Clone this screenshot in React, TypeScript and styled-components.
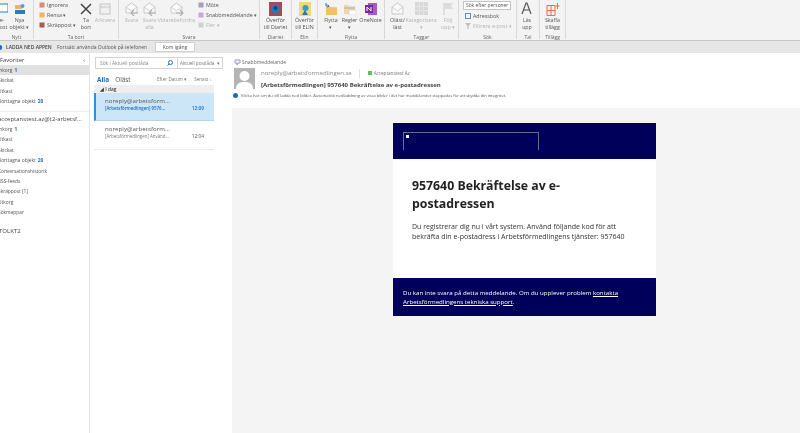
import * as React from "react";
import styled, { createGlobalStyle } from "styled-components";

const Global = createGlobalStyle`
  html, body { margin: 0; padding: 0; background: #fff; }
  body { font-family: "Open Sans", "Liberation Sans", sans-serif; color: #444; }
`;

const Window = styled.div`
  width: 800px;
  height: 433px;
  display: flex;
  flex-direction: column;
  overflow: hidden;
  filter: blur(0.35px);
`;

const Ribbon = styled.div`
  height: 40px;
  flex: none;
  display: flex;
  background: #f3f3f3;
  border-bottom: 1px solid #c8c8c8;
  overflow: hidden;
`;

const Group = styled.div<{ $w: number }>`
  width: ${(p) => p.$w}px;
  flex: none;
  box-sizing: border-box;
  border-right: 1px solid #d8d8d8;
  display: flex;
  flex-direction: column;
  height: 39px;
`;

const GroupBody = styled.div`
  height: 33.5px;
  flex: none;
  display: flex;
  align-items: flex-start;
`;

const GroupLabel = styled.div`
  font-size: 5px;
  line-height: 6px;
  text-align: center;
  color: #666;
`;

const Big = styled.div<{ $w: number; $off?: boolean; $shift?: number }>`
  width: ${(p) => p.$w}px;
  margin-left: ${(p) => p.$shift ?? 0}px;
  flex: none;
  display: flex;
  flex-direction: column;
  align-items: center;
  font-size: 5.3px;
  line-height: 7px;
  text-align: center;
  color: ${(p) => (p.$off ? "#b4b4b4" : "#555")};
  white-space: pre-line;
`;

const BigIcon = styled.div`
  height: 17px;
  flex: none;
  display: flex;
  align-items: center;
  justify-content: center;
`;

const SmallCol = styled.div<{ $w: number; $shift?: number }>`
  width: ${(p) => p.$w}px;
  margin-left: ${(p) => p.$shift ?? 0}px;
  flex: none;
  display: flex;
  flex-direction: column;
`;

const SmallItem = styled.div<{ $off?: boolean }>`
  height: 10px;
  display: flex;
  align-items: center;
  gap: 2px;
  font-size: 5.3px;
  white-space: nowrap;
  color: ${(p) => (p.$off ? "#b4b4b4" : "#555")};
`;

const SearchAction = styled(SmallItem)`
  padding-left: 2px;
`;

const PeopleInput = styled.div`
  width: 48px;
  height: 9px;
  box-sizing: border-box;
  background: #fff;
  border: 1px solid #c4c4c4;
  font-size: 4.9px;
  line-height: 7px;
  padding-left: 2px;
  color: #555;
  white-space: nowrap;
  overflow: hidden;
  margin: 1px 0 1px;
`;

const Notice = styled.div`
  height: 12px;
  flex: none;
  display: flex;
  align-items: center;
  background: #e6e6e6;
  font-size: 5px;
  color: #555;
  white-space: nowrap;
`;

const NoticeDot = styled.span`
  width: 2px;
  height: 5px;
  flex: none;
  background: #1b6cc0;
  border-radius: 0 3px 3px 0;
`;

const NoticeTitle = styled.span`
  margin-left: 4px;
  width: 51px;
  font-weight: 600;
  color: #444;
`;

const NoticeText = styled.span`
  width: 90px;
`;

const NoticeButton = styled.div`
  margin-left: 8px;
  width: 40px;
  height: 10px;
  background: #fff;
  border: 1px solid #d0d0d0;
  box-sizing: border-box;
  line-height: 8px;
  text-align: center;
`;

const Main = styled.div`
  flex: 1;
  min-height: 0;
  display: flex;
`;

const FolderPane = styled.div`
  width: 89px;
  flex: none;
  background: #fff;
  border-right: 1px solid #e4e4e4;
  padding-top: 1px;
  overflow: hidden;
`;

const Favorites = styled.div`
  height: 11px;
  display: flex;
  justify-content: space-between;
  align-items: center;
  font-size: 5.9px;
  color: #444;
  padding: 0 4px 0 0;
`;

const Folder = styled.div<{ $on?: boolean }>`
  height: 10.4px;
  line-height: 10.4px;
  font-size: 4.85px;
  color: #555;
  white-space: nowrap;
  background: ${(p) => (p.$on ? "#e1e1e1" : "transparent")};
  text-indent: -2px;
`;

const Count = styled.span`
  color: #1b6cc0;
  font-weight: 700;
  margin-left: 2px;
`;

const Rule = styled.div`
  height: 1px;
  background: #ececec;
  margin: 4px 0 3px;
`;

const Account = styled.div`
  font-size: 6px;
  line-height: 9.5px;
  white-space: nowrap;
  overflow: hidden;
  color: #444;
  margin: 0 2px 0 -2px;
`;

const Workspace = styled.div`
  font-size: 6.1px;
  line-height: 10px;
  margin: 8.5px 0 0 -1px;
  color: #444;
`;

const ListPane = styled.div`
  width: 136px;
  flex: none;
  box-sizing: border-box;
  padding: 4px 4px 0 4px;
  background: #fff;
`;

const SearchBox = styled.div`
  height: 12px;
  width: 128px;
  box-sizing: border-box;
  border: 1px solid #d4d4d4;
  display: flex;
  align-items: center;
  font-size: 4.9px;
  color: #888;
  margin-left: 1px;
`;

const SearchField = styled.div`
  width: 82px;
  height: 100%;
  flex: none;
  box-sizing: border-box;
  display: flex;
  align-items: center;
  justify-content: space-between;
  padding: 0 4px 0 4px;
  border-right: 1px solid #d4d4d4;
`;

const SearchScope = styled.div`
  flex: 1;
  display: flex;
  justify-content: space-between;
  padding: 0 2px;
  white-space: nowrap;
  color: #777;
  font-size: 4.6px;
`;

const Tabs = styled.div`
  height: 15px;
  box-sizing: border-box;
  padding-top: 3px;
  display: flex;
  align-items: center;
  margin: 1px 0 0 3px;
  width: 115px;
`;

const TabOn = styled.span`
  font-size: 6.4px;
  font-weight: 700;
  color: #1b6cc0;
`;

const TabOff = styled.span`
  font-size: 6.4px;
  margin-left: 6px;
  color: #555;
  flex: 1;
`;

const Sort = styled.span`
  font-size: 4.6px;
  color: #777;
  margin-left: 7px;
  white-space: nowrap;
`;

const DateRow = styled.div`
  height: 8px;
  width: 120px;
  line-height: 8px;
  background: #efefef;
  font-size: 4.8px;
  font-weight: 600;
  padding-left: 6px;
  box-sizing: border-box;
  color: #444;
`;

const Mail = styled.div<{ $on?: boolean }>`
  width: 120px;
  height: 28px;
  box-sizing: border-box;
  padding: 3px 10px 0 ${(p) => (p.$on ? 9 : 11)}px;
  background: ${(p) => (p.$on ? "#cde6f7" : "#fff")};
  border-left: ${(p) => (p.$on ? "2px solid #2f8fd8" : "none")};
  border-bottom: 1px solid ${(p) => (p.$on ? "#b9d3e6" : "#fff")};
`;

const MailSender = styled.div`
  font-size: 6.1px;
  line-height: 9px;
  letter-spacing: 0.05px;
  color: #555;
  white-space: nowrap;
`;

const MailLine = styled.div<{ $on?: boolean }>`
  display: flex;
  justify-content: space-between;
  font-size: 4.4px;
  line-height: 7px;
  white-space: nowrap;
  color: ${(p) => (p.$on ? "#1b6cc0" : "#777")};
  font-weight: ${(p) => (p.$on ? 600 : 400)};
`;

const MailTime = styled.span<{ $on?: boolean }>`
  font-size: 4.8px;
  color: ${(p) => (p.$on ? "#1b6cc0" : "#555")};
`;

const ListRule = styled.div`
  width: 120px;
  height: 1px;
  background: #ececec;
`;

const ReadingPane = styled.div`
  flex: 1;
  min-width: 0;
  display: flex;
  flex-direction: column;
  background: #fff;
`;

const MailHead = styled.div`
  height: 55px;
  flex: none;
  padding: 4px 0 0 8px;
  box-sizing: border-box;
`;

const QuickStep = styled.div`
  display: flex;
  align-items: center;
  gap: 1px;
  height: 10px;
  font-size: 5px;
  color: #666;
`;

const HeadRow = styled.div`
  display: flex;
  gap: 6px;
  margin-top: 1px;
`;

const Avatar = styled.div`
  width: 21px;
  height: 21px;
  flex: none;
  background: #b4b4b4;
  overflow: hidden;
`;

const HeadText = styled.div`
  display: flex;
  flex-direction: column;
`;

const FromLine = styled.div`
  display: flex;
  align-items: center;
  height: 10px;
  font-size: 6.05px;
  color: #888;
  white-space: nowrap;
`;

const FromDivider = styled.span`
  width: 1px;
  height: 9px;
  background: #e0e0e0;
  margin: 0 8px 0 7px;
`;

const Presence = styled.span`
  width: 4px;
  height: 4px;
  background: #56c85a;
  margin-right: 2px;
`;

const ToName = styled.span`
  font-size: 4.6px;
  color: #777;
`;

const Subject = styled.div`
  font-size: 6.05px;
  font-weight: 700;
  line-height: 11px;
  margin-top: 2px;
  color: #444;
  white-space: nowrap;
`;

const InfoBar = styled.div`
  display: flex;
  align-items: center;
  gap: 3px;
  height: 8px;
  margin: 0 0 0 -7px;
  padding-left: 6px;
  font-size: 4.1px;
  color: #555;
  white-space: nowrap;
`;

const InfoDot = styled.span`
  width: 5px;
  height: 5px;
  border-radius: 50%;
  background: #1b6cc0;
  flex: none;
`;

const MailBody = styled.div`
  flex: 1;
  margin-left: 6px;
  background: #f4f4f4;
  padding: 15px 0 0 161px;
`;

const Letter = styled.div`
  width: 263px;
  background: #fff;
`;

const LetterTop = styled.div`
  height: 36px;
  background: #00005a;
  box-sizing: border-box;
  padding: 9px 0 0 10px;
`;

const BrokenImage = styled.div`
  width: 136px;
  height: 18px;
  box-sizing: border-box;
  border: 1px solid #6a6a90;
  border-bottom: none;
  padding: 2px;
  display: flex;
  gap: 2px;
`;

const BrokenMark = styled.span`
  width: 3px;
  height: 3px;
  background: #fff;
  flex: none;
`;

const BrokenAlt = styled.span`
  font-size: 2px;
  line-height: 2.4px;
  color: #15154f;
`;

const LetterMain = styled.div`
  height: 119px;
  box-sizing: border-box;
  padding: 18px 24px 0 19px;
`;

const Title = styled.h1`
  margin: 0;
  font-size: 12.3px;
  line-height: 17.5px;
  font-weight: 700;
  color: #222;
  max-width: 160px;
`;

const Lead = styled.p`
  margin: 8.7px 0 0;
  font-size: 7.03px;
  line-height: 10px;
  color: #333;
`;

const LetterFoot = styled.div`
  height: 38px;
  background: #00005a;
  box-sizing: border-box;
  padding: 9.5px 10px 0;
  font-size: 6.15px;
  font-weight: 500;
  line-height: 9px;
  color: #fff;
  & a {
    color: #fff;
    text-decoration: underline;
  }
`;

const Envelope = ({ dir }: { dir: "l" | "r" }) => (
  <svg width="15" height="15" viewBox="0 0 15 15" fill="none">
    <path d="M2 6 7.5 2 13 6v6H2z" fill="#fafafa" stroke="#c8c8c8" />
    <path d="M2 6l5.5 4L13 6" stroke="#cfcfcf" />
    <path
      d={dir === "l" ? "M14 12H7m3-3-3 3 3 3" : "M7 12h7m-3-3 3 3-3 3"}
      stroke="#b0b0b0"
      strokeWidth="1.2"
    />
  </svg>
);

const MoveFolder = () => (
  <svg width="13" height="12" viewBox="0 0 13 12">
    <path d="M1 3h4l1 1.2h6V12H1z" fill="#f0c268" />
    <path d="M1 0v3h3M2.6 1.6 4 3 2.6 4.4" stroke="#2a7cc0" fill="none" />
  </svg>
);

const RuleFolder = () => (
  <svg width="13" height="12" viewBox="0 0 13 12">
    <path d="M1 2h4l1 1.2h6V11H1z" fill="#f5d79a" />
    <path d="M1 5h11" stroke="#8ab4d8" />
    <rect x="6" y="7" width="7" height="5" fill="#fff" stroke="#c4c4c4" strokeWidth="0.6" />
  </svg>
);

const Dot = ({ c }: { c: string }) => (
  <svg width="6" height="6" viewBox="0 0 6 6">
    <rect x="0.5" y="0.5" width="5" height="5" fill={c} />
  </svg>
);

const Grid = () => (
  <svg width="13" height="13" viewBox="0 0 13 13">
    <rect width="13" height="13" fill="#d8d8d8" />
    <path d="M4.5 0v13M8.5 0v13M0 4.5h13M0 8.5h13" stroke="#e6e6e6" />
  </svg>
);

export default function App() {
  return (
    <Window>
      <Global />
      <Ribbon>
        <Group $w={34}>
          <GroupBody>
            <Big $w={14} $shift={-5}>
              <BigIcon>
                <svg width="12" height="11" viewBox="0 0 12 11">
                  <rect x="0" y="1" width="12" height="8" fill="#fff" stroke="#2a7cc0" />
                </svg>
              </BigIcon>
              {"e-\npost"}
            </Big>
            <Big $w={21}>
              <BigIcon>
                <svg width="12" height="12" viewBox="0 0 12 12">
                  <rect x="1" y="2" width="7" height="4" fill="#eeb65c" />
                  <rect x="1" y="7" width="10" height="4" fill="#2a7cc0" />
                  <circle cx="8.5" cy="3" r="2" fill="#5a9ed6" />
                </svg>
              </BigIcon>
              {"Nya\nobjekt ▾"}
            </Big>
          </GroupBody>
          <GroupLabel>Nytt</GroupLabel>
        </Group>
        <Group $w={85}>
          <GroupBody>
            <SmallCol $w={40} $shift={5}>
              <SmallItem><Dot c="#d88a7a" />Ignorera</SmallItem>
              <SmallItem><Dot c="#eeb65c" />Rensa ▾</SmallItem>
              <SmallItem><Dot c="#a65a4a" />Skräppost ▾</SmallItem>
            </SmallCol>
            <Big $w={14}>
              <BigIcon>
                <svg width="12" height="12" viewBox="0 0 12 12">
                  <path d="M1 1l10 10M11 1 1 11" stroke="#444" strokeWidth="1.5" />
                </svg>
              </BigIcon>
              {"Ta\nbort"}
            </Big>
            <Big $w={24} $off>
              <BigIcon>
                <svg width="12" height="12" viewBox="0 0 12 12">
                  <rect x="1" y="1" width="10" height="10" fill="#f0f0f0" stroke="#c4c4c4" />
                  <path d="M1 4h10" stroke="#c4c4c4" />
                </svg>
              </BigIcon>
              Arkivera
            </Big>
          </GroupBody>
          <GroupLabel>Ta bort</GroupLabel>
        </Group>
        <Group $w={141}>
          <GroupBody>
            <Big $w={19} $off $shift={3}>
              <BigIcon><Envelope dir="l" /></BigIcon>
              Svara
            </Big>
            <Big $w={17} $off>
              <BigIcon><Envelope dir="l" /></BigIcon>
              {"Svara\nalla"}
            </Big>
            <Big $w={37} $off>
              <BigIcon><Envelope dir="r" /></BigIcon>
              Vidarebefordra
            </Big>
            <SmallCol $w={60} $shift={3}>
              <SmallItem><Dot c="#a89cc0" />Möte</SmallItem>
              <SmallItem><Dot c="#c8a8d8" />Snabbmeddelande ▾</SmallItem>
              <SmallItem $off><Dot c="#d0d0d0" />Fler ▾</SmallItem>
            </SmallCol>
          </GroupBody>
          <GroupLabel>Svara</GroupLabel>
        </Group>
        <Group $w={32}>
          <GroupBody>
            <Big $w={31}>
              <BigIcon>
                <svg width="13" height="14" viewBox="0 0 13 14">
                  <rect width="13" height="14" fill="#a84a50" />
                  <circle cx="6.5" cy="7" r="4.5" fill="#2a78b8" />
                  <circle cx="6.5" cy="6" r="2" fill="#16466e" />
                </svg>
              </BigIcon>
              {"Överför\ntill Diariet"}
            </Big>
          </GroupBody>
          <GroupLabel>Diariet</GroupLabel>
        </Group>
        <Group $w={26}>
          <GroupBody>
            <Big $w={25}>
              <BigIcon>
                <svg width="12" height="14" viewBox="0 0 12 14">
                  <rect width="12" height="14" fill="#f0d878" />
                  <circle cx="6.5" cy="6" r="3" fill="#3a9ad0" />
                  <path d="M3 13l3-5 3 5z" fill="#2a78b8" />
                </svg>
              </BigIcon>
              {"Överför\ntill ELIN"}
            </Big>
          </GroupBody>
          <GroupLabel>Elin</GroupLabel>
        </Group>
        <Group $w={67}>
          <GroupBody>
            <Big $w={20} $shift={3}>
              <BigIcon><MoveFolder /></BigIcon>
              {"Flytta\n▾"}
            </Big>
            <Big $w={17}>
              <BigIcon><RuleFolder /></BigIcon>
              {"Regler\n▾"}
            </Big>
            <Big $w={25}>
              <BigIcon>
                <svg width="12" height="12" viewBox="0 0 12 12">
                  <rect x="3" y="0" width="9" height="12" fill="#a85ac8" />
                  <rect x="0" y="2" width="8" height="8" fill="#7a2a9c" />
                  <path d="M2 8V4l4 4V4" stroke="#fff" fill="none" />
                </svg>
              </BigIcon>
              OneNote
            </Big>
          </GroupBody>
          <GroupLabel>Flytta</GroupLabel>
        </Group>
        <Group $w={74}>
          <GroupBody>
            <Big $w={19} $shift={3}>
              <BigIcon>
                <svg width="13" height="13" viewBox="0 0 13 13" fill="none">
                  <path d="M1 5 6.5 1 12 5v7H1z" fill="#fafafa" stroke="#c8c8c8" />
                  <path d="M1 5l5.5 4L12 5" stroke="#cfcfcf" />
                </svg>
              </BigIcon>
              {"Oläst/\nläst"}
            </Big>
            <Big $w={28} $off>
              <BigIcon><Grid /></BigIcon>
              {"Kategorisera\n▾"}
            </Big>
            <Big $w={16} $off $shift={5}>
              <BigIcon>
                <svg width="11" height="13" viewBox="0 0 11 13">
                  <path d="M1 1v12" stroke="#c8c8c8" />
                  <path d="M1.5 1H10L8 4l2 3H1.5z" fill="#dcdcdc" />
                </svg>
              </BigIcon>
              {"Följ\nupp ▾"}
            </Big>
          </GroupBody>
          <GroupLabel>Taggar</GroupLabel>
        </Group>
        <Group $w={58}>
          <GroupBody>
            <SmallCol $w={54} $shift={4}>
              <PeopleInput>Sök efter personer</PeopleInput>
              <SearchAction>
                <svg width="6" height="6" viewBox="0 0 6 6">
                  <rect x="0.5" y="0.5" width="5" height="5" fill="none" stroke="#6a8cb0" />
                </svg>
                Adressbok
              </SearchAction>
              <SearchAction $off>
                <svg width="6" height="6" viewBox="0 0 6 6">
                  <path d="M0 0h6L3.6 3v3H2.4V3z" fill="#c0c0c0" />
                </svg>
                Filtrera e-post ▾
              </SearchAction>
            </SmallCol>
          </GroupBody>
          <GroupLabel>Sök</GroupLabel>
        </Group>
        <Group $w={23}>
          <GroupBody>
            <Big $w={20}>
              <BigIcon>
                <svg width="12" height="13" viewBox="0 0 12 13">
                  <path d="M1 12 5 1h1l4 11M2.6 8h6" stroke="#555" strokeWidth="1.2" fill="none" />
                </svg>
              </BigIcon>
              {"Läs\nupp"}
            </Big>
          </GroupBody>
          <GroupLabel>Tal</GroupLabel>
        </Group>
        <Group $w={26}>
          <GroupBody>
            <Big $w={25}>
              <BigIcon>
                <svg width="14" height="14" viewBox="0 0 14 14" fill="none" stroke="#e0714a">
                  <path d="M1 3.5h8v10H1zM1 8.5h8M5 3.5v10M9.5 4h4M11.5 1v6" />
                </svg>
              </BigIcon>
              {"Skaffa\ntillägg"}
            </Big>
          </GroupBody>
          <GroupLabel>Tillägg</GroupLabel>
        </Group>
      </Ribbon>

      <Notice>
        <NoticeDot />
        <NoticeTitle>LADDA NED APPEN</NoticeTitle>
        <NoticeText>Fortsätt använda Outlook på telefonen</NoticeText>
        <NoticeButton>Kom igång</NoticeButton>
      </Notice>

      <Main>
        <FolderPane>
          <Favorites>
            <span>Favoriter</span>
            <span>‹</span>
          </Favorites>
          <Folder $on>Inkorg<Count>1</Count></Folder>
          <Folder>Skickat</Folder>
          <Folder>Utkast</Folder>
          <Folder>Borttagna objekt<Count>20</Count></Folder>
          <Rule />
          <Account>acceptanstest.az@t2-arbetsf...</Account>
          <Folder>Inkorg<Count>1</Count></Folder>
          <Folder>Utkast</Folder>
          <Folder>Skickat</Folder>
          <Folder>Borttagna objekt<Count>20</Count></Folder>
          <Folder>Konversationshistorik</Folder>
          <Folder>RSS-feeds</Folder>
          <Folder>Skräppost [1]</Folder>
          <Folder>Utkorg</Folder>
          <Folder>Sökmappar</Folder>
          <Workspace>TOLKT2</Workspace>
        </FolderPane>

        <ListPane>
          <SearchBox>
            <SearchField>
              <span>Sök i Aktuell postlåda</span>
              <svg width="6" height="6" viewBox="0 0 6 6" fill="none" stroke="#2a6cb0">
                <circle cx="3.5" cy="2.5" r="2" />
                <path d="M2 4 .5 5.5" />
              </svg>
            </SearchField>
            <SearchScope>
              <span>Aktuell postlåda</span>
              <span>▾</span>
            </SearchScope>
          </SearchBox>
          <Tabs>
            <TabOn>Alla</TabOn>
            <TabOff>Oläst</TabOff>
            <Sort>Efter Datum ▾</Sort>
            <Sort>Senast ↓</Sort>
          </Tabs>
          <DateRow>◢ I dag</DateRow>
          <Mail $on>
            <MailSender>noreply@arbetsform...</MailSender>
            <MailLine $on>
              <span>[Arbetsförmedlingen] 9576...</span>
              <MailTime $on>12:09</MailTime>
            </MailLine>
          </Mail>
          <Mail>
            <MailSender>noreply@arbetsform...</MailSender>
            <MailLine>
              <span>[Arbetsförmedlingen] Använd...</span>
              <MailTime>12:04</MailTime>
            </MailLine>
          </Mail>
          <ListRule />
        </ListPane>

        <ReadingPane>
          <MailHead>
            <QuickStep>
              <svg width="7" height="7" viewBox="0 0 7 7" fill="none" stroke="#a08cc0">
                <path d="M1 1h5v3H4L3 6V4H1z" />
              </svg>
              Snabbmeddelande
            </QuickStep>
            <HeadRow>
              <Avatar>
                <svg width="21" height="21" viewBox="0 0 21 21">
                  <circle cx="10.5" cy="8" r="5" fill="#fff" />
                  <path d="M2 21c0-6 4-7 8.5-7S19 15 19 21z" fill="#fff" />
                </svg>
              </Avatar>
              <HeadText>
                <FromLine>
                  noreply@arbetsformedlingen.se
                  <FromDivider />
                  <Presence />
                  <ToName>Acceptanstest Az</ToName>
                </FromLine>
                <Subject>[Arbetsförmedlingen] 957640 Bekräftelse av e-postadressen</Subject>
              </HeadText>
            </HeadRow>
            <InfoBar>
              <InfoDot />
              Klicka här om du vill ladda ned bilder. Automatisk nedladdning av vissa bilder i det här meddelandet stoppades för att skydda din integritet.
            </InfoBar>
          </MailHead>
          <MailBody>
            <Letter>
              <LetterTop>
                <BrokenImage>
                  <BrokenMark />
                  <BrokenAlt>Högerklicka här för att ladda ned bilder. Outlook förhindrade automatisk nedladdning av den här bilden från Internet.</BrokenAlt>
                </BrokenImage>
              </LetterTop>
              <LetterMain>
                <Title>957640 Bekräftelse av e-postadressen</Title>
                <Lead>
                  Du registrerar dig nu i vårt system. Använd följande kod för att bekräfta din e-postadress i Arbetsförmedlingens tjänster: 957640
                </Lead>
              </LetterMain>
              <LetterFoot>
                Du kan inte svara på detta meddelande. Om du upplever problem <a>kontakta Arbetsförmedlingens tekniska support</a>.
              </LetterFoot>
            </Letter>
          </MailBody>
        </ReadingPane>
      </Main>
    </Window>
  );
}
